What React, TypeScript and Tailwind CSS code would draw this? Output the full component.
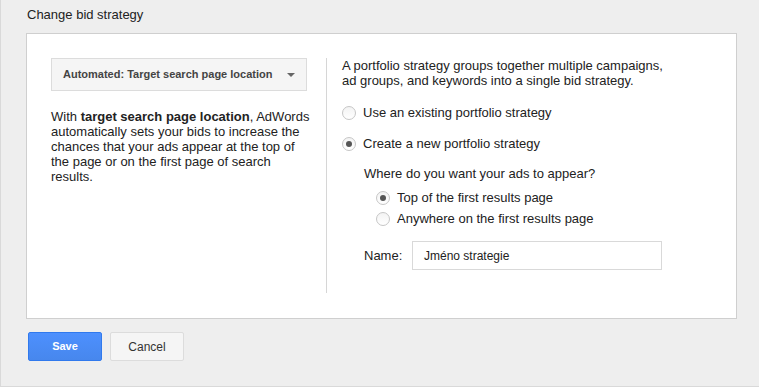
const Radio = ({ checked }: { checked?: boolean }) => (
  <span className="flex h-[14px] w-[14px] shrink-0 items-center justify-center rounded-full border border-[#c6c6c6] bg-gradient-to-b from-[#f3f3f3] to-white">
    {checked && <span className="h-[6px] w-[6px] rounded-full bg-[#555]" />}
  </span>
);

const RadioRow = ({ label, checked }: { label: string; checked?: boolean }) => (
  <label className="flex items-center gap-[7px] leading-[15px]">
    <Radio checked={checked} />
    <span>{label}</span>
  </label>
);

const App = () => {
  return (
    <div
      className="h-[387px] w-[759px] border-b border-l border-[#d9d9d9] bg-[#eeeeee] text-[13px] text-[#222]"
      style={{ fontFamily: '"Liberation Sans", Arial, sans-serif' }}
    >
      <div className="pl-[26px] pt-[7px] leading-[15px]">Change bid strategy</div>

      <div className="ml-[25px] mt-[11px] flex h-[286px] w-[711px] border border-[#cfcfcf] bg-white px-[24px] pt-[24px] pb-[25px]">
        <div className="w-[276px] shrink-0 border-r border-[#d6d6d6]">
          <div className="flex h-[33px] w-[256px] items-center justify-between border border-[#dcdcdc] bg-[#f5f5f5] pl-[11px] pr-[11px] text-[11px] font-bold text-[#444]">
            <span>Automated: Target search page location</span>
            <span className="h-0 w-0 border-x-[4px] border-t-[4px] border-x-transparent border-t-[#666]" />
          </div>
          <p className="mt-[18px] whitespace-nowrap leading-[15px]">
            With <b>target search page location</b>, AdWords
            <br />
            automatically sets your bids to increase the
            <br />
            chances that your ads appear at the top of
            <br />
            the page or on the first page of search
            <br />
            results.
          </p>
        </div>

        <div className="flex-1 pl-[15px]">
          <p className="leading-[15px]">
            A portfolio strategy groups together multiple campaigns,
            <br />
            ad groups, and keywords into a single bid strategy.
          </p>
          <div className="mt-[17px]">
            <RadioRow label="Use an existing portfolio strategy" />
          </div>
          <div className="mt-[16px]">
            <RadioRow label="Create a new portfolio strategy" checked />
          </div>
          <div className="pl-[22px]">
            <div className="mt-[15px] leading-[15px]">
              Where do you want your ads to appear?
            </div>
            <div className="mt-[9px] flex flex-col gap-[6px] pl-[12px]">
              <RadioRow label="Top of the first results page" checked />
              <RadioRow label="Anywhere on the first results page" />
            </div>
            <div className="mt-[15px] flex items-center">
              <span className="w-[48px]">Name:</span>
              <div className="flex h-[29px] w-[250px] items-center border border-[#d9d9d9] px-[11px] text-[12px]">
                Jméno strategie
              </div>
            </div>
          </div>
        </div>
      </div>

      <div className="ml-[27px] mt-[13px] flex gap-[8px]">
        <button className="h-[29px] w-[74px] rounded-[2px] border border-[#3079ed] bg-gradient-to-b from-[#4d90fe] to-[#4787ed] text-[11px] font-bold text-white">
          Save
        </button>
        <button className="h-[29px] w-[74px] rounded-[2px] border border-[#dcdcdc] bg-[#f5f5f5] text-[12px] text-[#333]">
          Cancel
        </button>
      </div>
    </div>
  );
};

export default App;
